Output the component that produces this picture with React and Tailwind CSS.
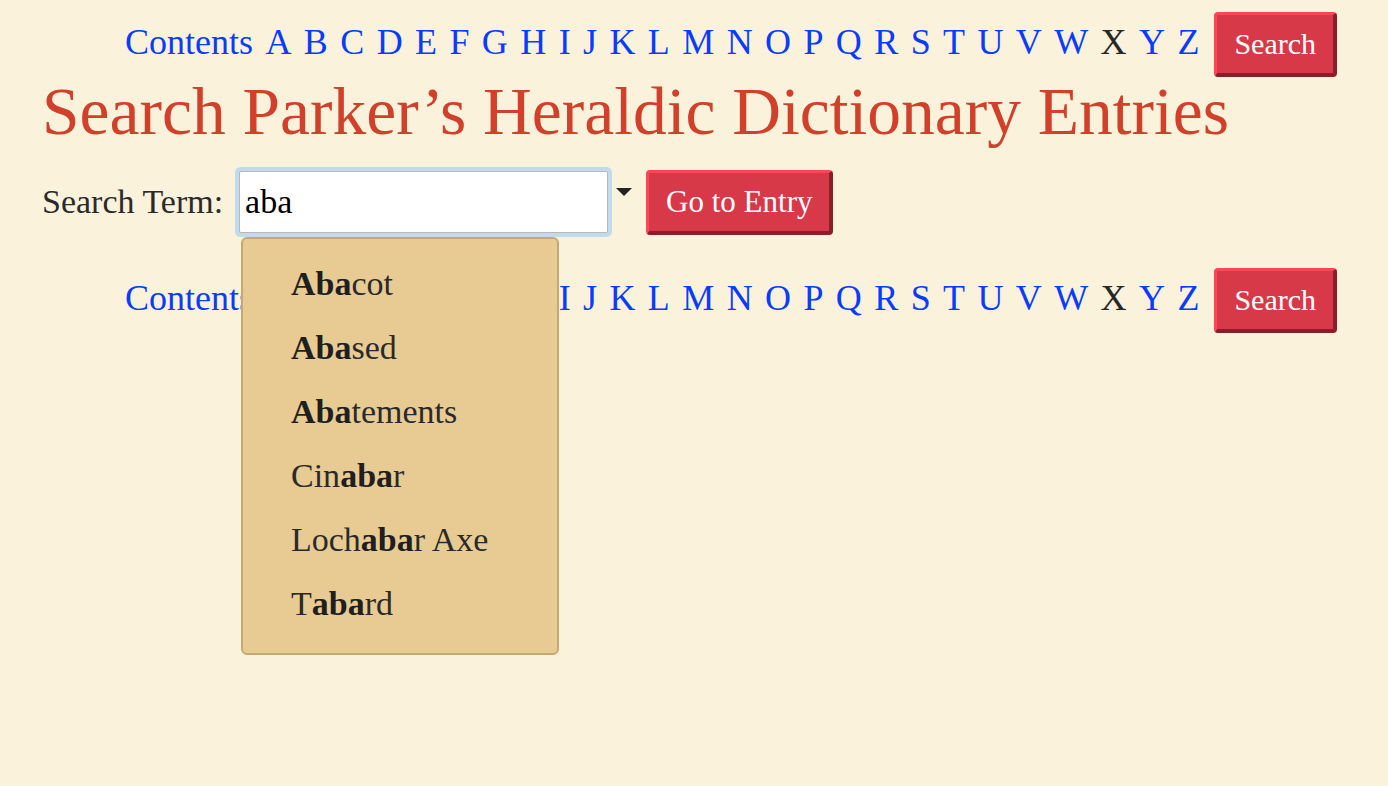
import React from 'react';

const LETTERS = 'ABCDEFGHIJKLMNOPQRSTUVWXYZ'.split('');
const RESULTS = ['Abacot', 'Abased', 'Abatements', 'Cinabar', 'Lochabar Axe', 'Tabard'];
const TERM = 'aba';

const RedButton = ({ children, className = '' }) => (
    <button
        className={`h-[65px] px-[17px] rounded-[4px] bg-[#d83949] text-white border-t-[3px] border-l-[3px] border-b-[4px] border-r-[4px] border-t-[#ff4455] border-l-[#ff4455] border-b-[#8a1f2c] border-r-[#8a1f2c] leading-none ${className}`}
    >
        {children}
    </button>
);

const LetterNav = ({ className = '' }) => (
    <nav className={`flex items-center justify-end pr-[51px] text-[36px] leading-none ${className}`}>
        <div className="flex items-center gap-[12.4px] pb-[5px]">
            <a className="text-[#0a3cff]">Contents</a>
            {LETTERS.map(l => (
                <a key={l} className={l === 'X' ? 'text-[#262626]' : 'text-[#0a3cff]'}>{l}</a>
            ))}
        </div>
        <RedButton className="ml-[15px] text-[30px]">Search</RedButton>
    </nav>
);

// highlight the matched part of each suggestion
const Highlight = ({ text }) => {
    const i = text.toLowerCase().indexOf(TERM);
    if (i < 0) return text;
    return (
        <>
            {text.slice(0, i)}
            <b className="font-bold text-[#1f1f1f]">{text.slice(i, i + TERM.length)}</b>
            {text.slice(i + TERM.length)}
        </>
    );
};

export default function App() {
    return (
        <div className="min-h-screen w-full bg-[#fbf2dc] text-[#2a2a2a] font-['Liberation_Serif',serif] pt-[12px]">
            <LetterNav />

            <h1 className="pl-[42px] mt-[1px] text-[67.5px] leading-[68px] text-[#d0402a] font-normal">
                Search Parker’s Heraldic Dictionary Entries
            </h1>

            <div className="relative pl-[42px] mt-[21px]">
                <div className="flex items-center h-[70px]">
                    <label className="text-[34px] leading-none">Search Term:</label>
                    <input
                        defaultValue="aba"
                        className="ml-[16px] w-[369px] h-[62px] bg-white border border-[#b8b8b8] rounded-[2px] px-[5px] text-[34px] text-black outline-none ring-[4px] ring-[#c0dbee] font-['Liberation_Serif',serif]"
                    />
                    <span className="self-start mt-[21px] ml-[8px] w-0 h-0 border-l-[8px] border-r-[8px] border-t-[8px] border-l-transparent border-r-transparent border-t-[#222]" />
                    <RedButton className="ml-[14px] text-[31px]">Go to Entry</RedButton>
                </div>

                <ul className="absolute z-10 left-[241px] top-[70px] w-[318px] h-[418px] bg-[#e8ca93] border-2 border-[#c8a872] rounded-[6px] pt-[13px]">
                    {RESULTS.map(r => (
                        <li key={r} className="h-[64px] leading-[64px] pl-[48px] text-[34px] text-[#2a2a2a]">
                            <Highlight text={r} />
                        </li>
                    ))}
                </ul>
            </div>

            <LetterNav className="mt-[31px]" />
        </div>
    );
}
